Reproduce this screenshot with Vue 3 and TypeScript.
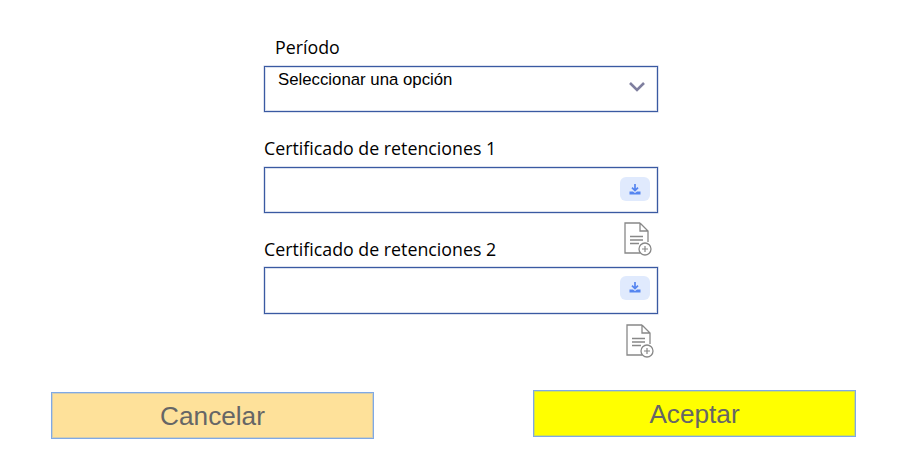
<script setup lang="ts">
interface Field { label: string; iconClass: string }
const fields: Field[] = [
  { label: 'Certificado de retenciones 1', iconClass: 'first' },
  { label: 'Certificado de retenciones 2', iconClass: 'second' },
]
</script>

<template>
  <main class="page">
    <section class="form">
      <label class="label period-label">Período</label>
      <div class="box select">
        <span class="select-text">Seleccionar una opción</span>
        <svg class="chevron" width="18" height="11" viewBox="0 0 18 11">
          <path d="M2 2 L9 9 L16 2" fill="none" stroke="#7f7f9f" stroke-width="2.6" />
        </svg>
      </div>
      <div v-for="f in fields" :key="f.label" class="field" :class="f.iconClass">
        <label class="label">{{ f.label }}</label>
        <div class="box upload">
          <span class="upload-btn">
            <svg width="14" height="13" viewBox="0 0 14 13">
              <path d="M7 1 V7 M4 4.6 L7 7.6 L10 4.6" fill="none" stroke="#5585f0" stroke-width="1.7" />
              <path d="M1.5 8.5 H5 L7 10 L9 8.5 H12.5 V11.5 H1.5 Z" fill="#5585f0" />
            </svg>
          </span>
        </div>
        <svg class="file-icon" width="28" height="34" viewBox="0 0 28 34">
          <path d="M16 1 H1 V31 H16 M16 1 L24 9 V20 M16 1 V9 H24" fill="none" stroke="#888" stroke-width="1.3" />
          <path d="M6 14.5 H19 M6 18 H19 M6 21.5 H15" fill="none" stroke="#888" stroke-width="1.3" />
          <circle cx="21" cy="27" r="6" fill="#fff" stroke="#888" stroke-width="1.3" />
          <path d="M18 27 H24 M21 24 V30" fill="none" stroke="#888" stroke-width="1.2" />
        </svg>
      </div>
    </section>
    <section class="actions">
      <button class="btn cancel" type="button">Cancelar</button>
      <button class="btn accept" type="button">Aceptar</button>
    </section>
  </main>
</template>

<style scoped>
.page {
  width: 914px;
  height: 461px;
  box-sizing: border-box;
  padding-top: 35px;
  overflow: hidden;
  background: #fff;
}
.form {
  width: 394px;
  margin-left: 264px;
  display: flex;
  flex-direction: column;
}
.label {
  display: block;
  height: 24px;
  line-height: 24px;
  font-family: "Open Sans", "Noto Sans", sans-serif;
  font-size: 17.8px;
  color: #000;
  white-space: nowrap;
}
.period-label {
  margin-left: 11px;
  margin-bottom: 7px;
}
.box {
  box-sizing: border-box;
  width: 394px;
  height: 46px;
  border: 1px solid #3a5aa2;
  box-shadow: inset 0 0 0 1px rgba(58, 90, 162, 0.18), 0 0 0 0.5px rgba(58, 90, 162, 0.35);
  background: #fff;
  display: flex;
}
.select {
  justify-content: space-between;
  padding: 3px 11px 0 13px;
}
.select-text {
  font-family: "Liberation Sans", Arial, sans-serif;
  font-size: 16.8px;
  line-height: 20px;
  color: #000;
}
.chevron {
  margin-top: 11px;
}
.field {
  display: flex;
  flex-direction: column;
  margin-top: 24px;
}
.field.second {
  margin-top: -19px;
}
.second .box {
  height: 47px;
}
.upload {
  justify-content: flex-end;
  align-items: center;
  padding-right: 7px;
  margin-top: 7px;
}
.second .upload {
  margin-top: 6px;
}
.upload-btn {
  width: 30px;
  height: 24px;
  margin-top: -2px;
  border-radius: 6px;
  background: #e0eafd;
  display: flex;
  align-items: center;
  justify-content: center;
}
.second .upload-btn {
  margin-top: -6px;
}
.file-icon {
  align-self: flex-end;
  margin: 9px 6px 0 0;
}
.second .file-icon {
  margin: 10px 4px 0 0;
}
.actions {
  display: flex;
  justify-content: space-between;
  align-items: flex-start;
  width: 805px;
  margin: 32px 0 0 51px;
}
.btn {
  box-sizing: border-box;
  width: 323px;
  height: 47px;
  border: 1px solid #7fa9e6;
  box-shadow: inset 0 0 0 1px rgba(127, 169, 230, 0.35);
  padding: 2px 0 0;
  font-family: "Liberation Sans", Arial, sans-serif;
  font-size: 26.2px;
  color: #666;
}
.cancel {
  background: #fee19a;
  margin-top: 2px;
}
.accept {
  background: #ffff00;
}
</style>
